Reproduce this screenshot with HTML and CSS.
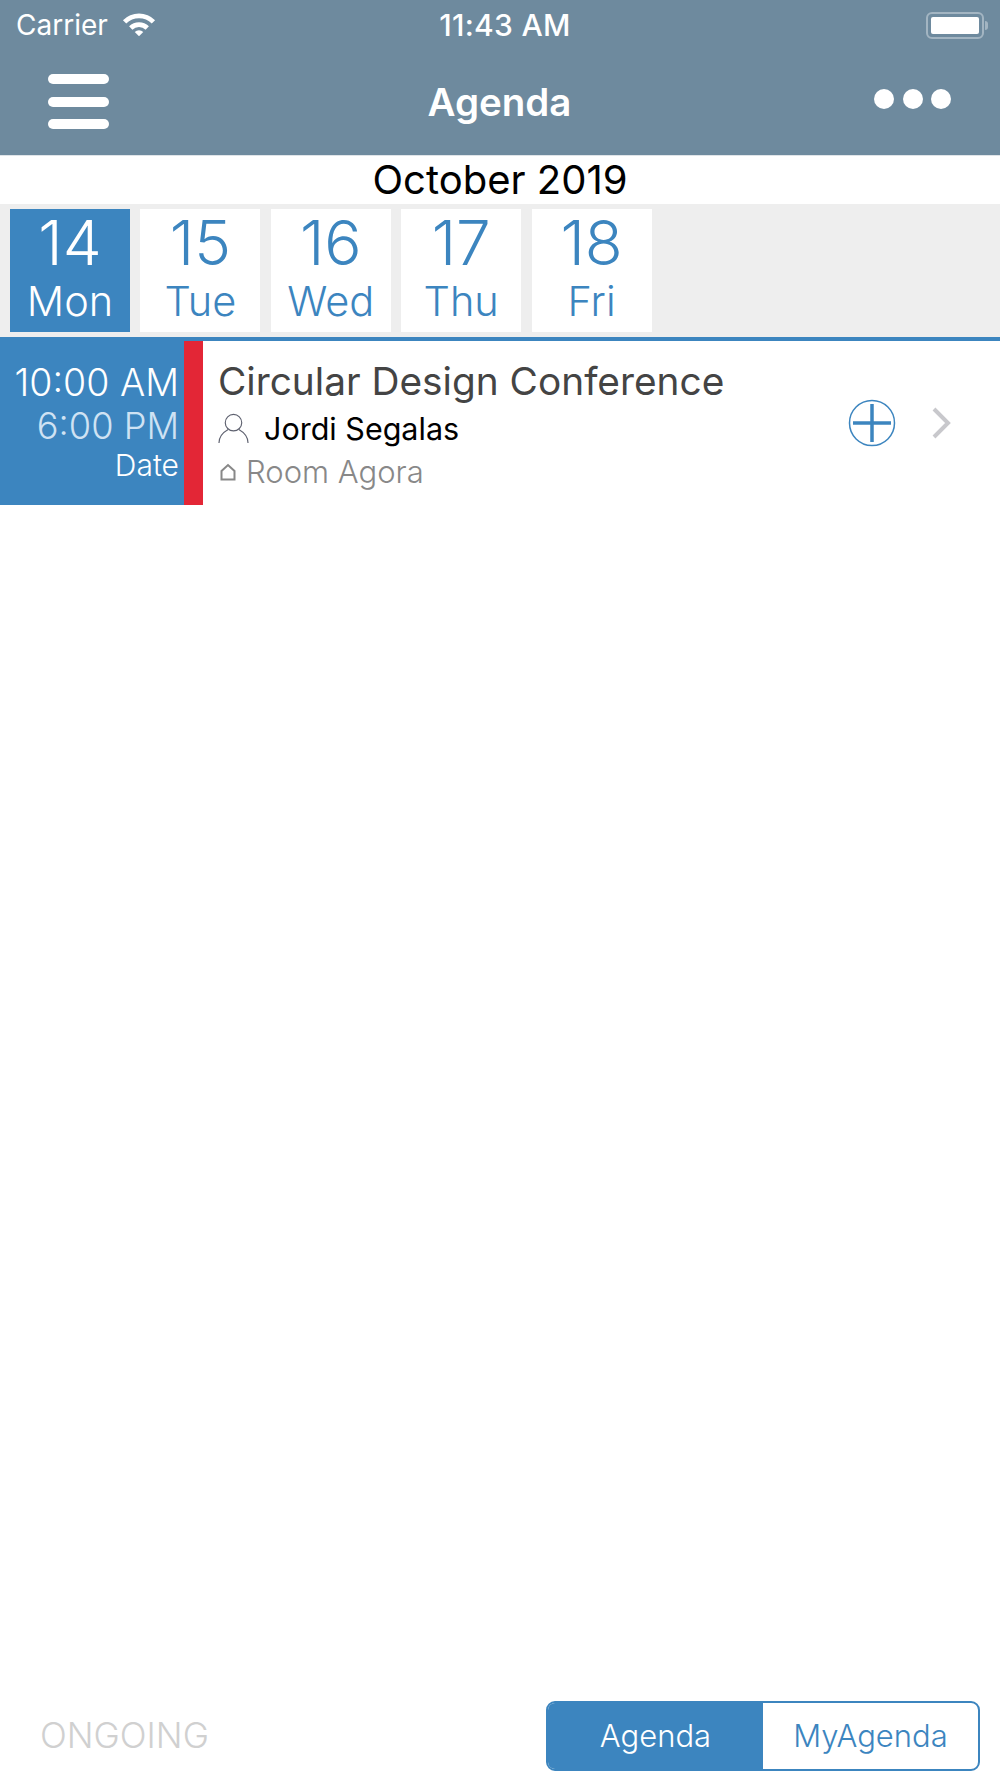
FILE: index.html
```html
<!DOCTYPE html>
<html lang="en">
<head>
    <meta charset="UTF-8">
    <meta name="viewport" content="width=device-width, initial-scale=1.0">
    <title>Agenda</title>
    <link rel="stylesheet" href="styles.css">
</head>
<body>
    <div class="app">
        <header class="header">
            <div class="status-bar">
                <div class="status-left">
                    <span class="carrier">Carrier</span>
                    <svg class="wifi" width="34" height="25" viewBox="0 0 36 26">
                        <path d="M1 9.5 A24 24 0 0 1 35 9.5 L31.5 13 A19 19 0 0 0 4.5 13 Z" fill="#fff"/>
                        <path d="M7.5 16 A15 15 0 0 1 28.5 16 L25 19.5 A10 10 0 0 0 11 19.5 Z" fill="#fff"/>
                        <path d="M13.5 22 A6.5 6.5 0 0 1 22.5 22 L18 26.5 Z" fill="#fff"/>
                    </svg>
                </div>
                <div class="clock">11:43 AM</div>
                <div class="battery">
                    <div class="battery-body"><div class="battery-fill"></div></div>
                    <div class="battery-tip"></div>
                </div>
            </div>
            <div class="nav-bar">
                <div class="nav-side"><div class="menu-icon"><span></span><span></span><span></span></div></div>
                <div class="nav-title">Agenda</div>
                <div class="nav-side nav-right"><div class="more-icon"><span></span><span></span><span></span></div></div>
            </div>
        </header>

        <div class="month">October 2019</div>

        <div class="days">
            <div class="day active"><div class="day-num">14</div><div class="day-name">Mon</div></div>
            <div class="day"><div class="day-num">15</div><div class="day-name">Tue</div></div>
            <div class="day"><div class="day-num">16</div><div class="day-name">Wed</div></div>
            <div class="day"><div class="day-num">17</div><div class="day-name">Thu</div></div>
            <div class="day"><div class="day-num">18</div><div class="day-name">Fri</div></div>
        </div>

        <div class="list">
            <div class="event">
                <div class="event-time">
                    <div class="time-start">10:00 AM</div>
                    <div class="time-end">6:00 PM</div>
                    <div class="time-label">Date</div>
                </div>
                <div class="event-color"></div>
                <div class="event-info">
                    <div class="event-title">Circular Design Conference</div>
                    <div class="event-speaker">
                        <svg width="31" height="31" viewBox="0 0 32 32" fill="none" stroke="#5f6270" stroke-width="1.2">
                            <circle cx="16" cy="10" r="8.5"/>
                            <path d="M1 31 C1 23 6 19.5 10.5 17"/>
                            <path d="M31 31 C31 23 26 19.5 21.5 17"/>
                        </svg>
                        <span>Jordi Segalas</span>
                    </div>
                    <div class="event-room">
                        <svg width="16" height="18" viewBox="0 0 16 18" fill="none" stroke="#888" stroke-width="2">
                            <path d="M1.5 8 L8 2 L14.5 8 V16.5 H1.5 Z"/>
                        </svg>
                        <span>Room Agora</span>
                    </div>
                </div>
                <svg class="add-icon" width="48" height="48" viewBox="0 0 48 48" fill="none" stroke="#3c85bf">
                    <circle cx="24" cy="24" r="22.5" stroke-width="1.5"/>
                    <path d="M5 24 H43 M24 5 V43" stroke-width="3.5"/>
                </svg>
                <svg class="chevron" width="20" height="32" viewBox="0 0 20 32" fill="none" stroke="#c8c8cc" stroke-width="4">
                    <path d="M2 2 L16 16 L2 30"/>
                </svg>
            </div>
        </div>

        <footer class="footer">
            <div class="ongoing">ONGOING</div>
            <div class="segment">
                <div class="segment-item selected">Agenda</div>
                <div class="segment-item">MyAgenda</div>
            </div>
        </footer>
    </div>
</body>
</html>
```

FILE: styles.css
```css
* {
    box-sizing: border-box;
}
body {
    margin: 0;
    background-color: #fff;
    font-family: Inter, "Liberation Sans", sans-serif;
}
.app {
    display: flex;
    flex-direction: column;
    width: 1000px;
    height: 1778px;
}
.header {
    height: 156px;
    background-color: #6e8a9e;
    border-bottom: 1px solid #dfe4e8;
    color: #fff;
}
.status-bar {
    display: flex;
    align-items: center;
    justify-content: space-between;
    height: 50px;
    padding: 0 12px 0 16px;
}
.status-left {
    display: flex;
    align-items: center;
    gap: 14px;
    width: 300px;
}
.carrier {
    font-size: 28px;
}
.wifi {
    margin-top: -3px;
}
.clock {
    font-size: 30px;
    font-weight: 500;
    margin-left: 6px;
    letter-spacing: 0.3px;
}
.battery {
    display: flex;
    align-items: center;
    justify-content: flex-end;
    width: 300px;
}
.battery-body {
    width: 58px;
    height: 27px;
    padding: 3px;
    border: 2px solid #a3b5c2;
    border-radius: 6px;
}
.battery-fill {
    height: 100%;
    background-color: #fff;
    border-radius: 2px;
}
.battery-tip {
    width: 3px;
    height: 9px;
    margin-left: 1px;
    background-color: #a3b5c2;
    border-radius: 0 3px 3px 0;
}
.nav-bar {
    display: flex;
    align-items: center;
    justify-content: space-between;
    height: 105px;
    padding: 0 49px 2px 48px;
}
.nav-side {
    display: flex;
    width: 200px;
}
.nav-right {
    justify-content: flex-end;
}
.menu-icon {
    display: flex;
    flex-direction: column;
    gap: 12.5px;
    width: 61px;
}
.menu-icon span {
    height: 10px;
    background-color: #fff;
    border-radius: 5px;
}
.nav-title {
    font-size: 38.5px;
    font-weight: 600;
}
.more-icon {
    display: flex;
    gap: 8.5px;
    margin-top: -5px;
}
.more-icon span {
    width: 20px;
    height: 20px;
    background-color: #fff;
    border-radius: 50%;
}
.month {
    height: 48px;
    line-height: 48px;
    text-align: center;
    font-size: 40px;
    color: #000;
}
.days {
    display: flex;
    gap: 10.4px;
    height: 133px;
    padding: 5px 10px 5px;
    background-color: #eee;
}
.day {
    width: 120px;
    background-color: #fff;
    color: #3c85bf;
    text-align: center;
}
.day.active {
    background-color: #3c85bf;
    color: #fff;
}
.day-num {
    height: 68px;
    line-height: 68px;
    font-size: 62px;
    font-weight: 300;
}
.day-name {
    height: 50px;
    line-height: 48px;
    font-size: 41.5px;
    font-weight: 300;
}
.list {
    flex: 1;
    border-top: 4px solid #3c85bf;
}
.event {
    display: flex;
    align-items: center;
    height: 164px;
}
.event-time {
    width: 184px;
    height: 100%;
    padding: 20px 5px 0 0;
    background-color: #3c85bf;
    color: #fff;
    text-align: right;
}
.time-start,
.time-end {
    height: 43px;
    line-height: 43px;
    font-size: 37.5px;
    font-weight: 300;
}
.time-end {
    line-height: 45px;
    font-size: 36.2px;
    color: #cfe2f3;
}
.time-label {
    line-height: 36px;
    font-size: 30px;
    font-weight: 300;
}
.event-color {
    width: 19px;
    height: 100%;
    background-color: #e32636;
}
.event-info {
    flex: 1;
    align-self: flex-start;
    padding: 17px 0 0 15px;
}
.event-title {
    line-height: 46px;
    font-size: 38.8px;
    color: #444;
}
.event-speaker {
    display: flex;
    align-items: center;
    gap: 15px;
    height: 42px;
    margin-top: 3.5px;
    font-size: 30.5px;
    color: #000;
}
.event-room {
    display: flex;
    align-items: center;
    gap: 10px;
    height: 44px;
    margin-left: 2px;
    font-size: 31px;
    font-weight: 300;
    color: #888;
}
.add-icon {
    margin-right: 36px;
}
.chevron {
    margin-right: 48px;
}
.footer {
    display: flex;
    align-items: center;
    justify-content: space-between;
    height: 78px;
    padding: 0 20px 6px 40px;
}
.ongoing {
    margin-bottom: 2px;
    font-size: 35.3px;
    font-weight: 300;
    color: #d0d0d0;
}
.segment {
    display: flex;
    width: 434px;
    height: 70px;
    border: 2px solid #3c85bf;
    border-radius: 9px;
    overflow: hidden;
}
.segment-item {
    flex: 1;
    text-align: center;
    line-height: 66px;
    font-size: 31px;
    font-weight: 300;
    color: #3c85bf;
}
.segment-item.selected {
    flex: none;
    width: 215px;
    background-color: #3c85bf;
    color: #fff;
}
```
